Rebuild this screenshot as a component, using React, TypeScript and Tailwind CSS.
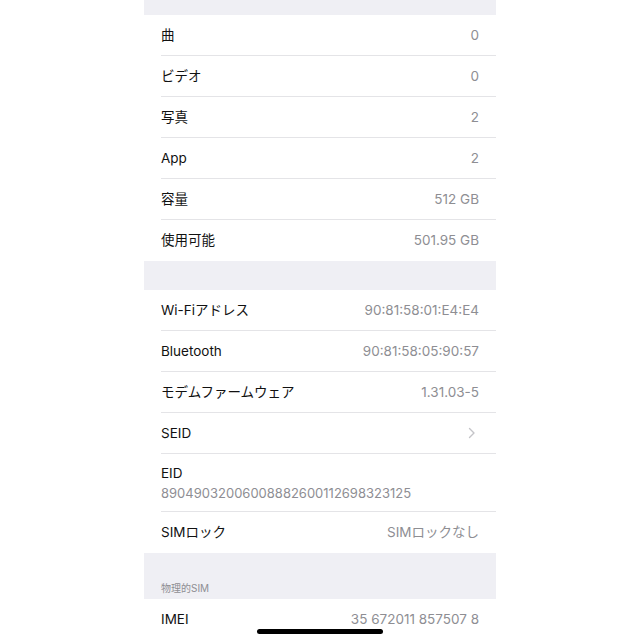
import React from "react";

const font = { fontFamily: 'Inter, "Noto Sans CJK JP", sans-serif' };

function Row({ label, value, last, chevron }: { label: string; value?: string; last?: boolean; chevron?: boolean }) {
  return (
    <div className="pl-[17px] bg-white">
      <div className={`flex h-[41px] items-center justify-between pr-[17px] ${last ? "" : "border-b border-[#e4e4e7]"}`}>
        <span className="text-[13.5px] text-[#111]">{label}</span>
        {chevron ? (
          <svg width="8" height="12" viewBox="0 0 8 12" className="mr-[3px]">
            <path d="M1.5 1.5 L6 6 L1.5 10.5" fill="none" stroke="#c4c4c8" strokeWidth="1.4" strokeLinecap="round" strokeLinejoin="round" />
          </svg>
        ) : (
          <span className="text-[13.5px] text-[#8e8e93]">{value}</span>
        )}
      </div>
    </div>
  );
}

export default function App() {
  return (
    <div className="relative h-[640px] w-[640px] overflow-hidden bg-white" style={font}>
      <div className="mx-auto w-[352px]">
        <div className="h-[15px] bg-[#efeff4]" />
        <Row label="曲" value="0" />
        <Row label="ビデオ" value="0" />
        <Row label="写真" value="2" />
        <Row label="App" value="2" />
        <Row label="容量" value="512 GB" />
        <Row label="使用可能" value="501.95 GB" last />
        <div className="h-[29px] bg-[#efeff4]" />
        <Row label="Wi-Fiアドレス" value="90:81:58:01:E4:E4" />
        <Row label="Bluetooth" value="90:81:58:05:90:57" />
        <Row label="モデムファームウェア" value="1.31.03-5" />
        <Row label="SEID" chevron />
        <div className="pl-[17px] bg-white">
          <div className="flex h-[58px] flex-col justify-center border-b border-[#e4e4e7] pr-[17px]">
            <span className="text-[13.5px] leading-[20px] text-[#111]">EID</span>
            <span className="text-[13px] leading-[20px] text-[#8e8e93]">89049032006008882600112698323125</span>
          </div>
        </div>
        <Row label="SIMロック" value="SIMロックなし" last />
        <div className="flex h-[46px] items-end bg-[#efeff4] pb-[3px] pl-[17px]">
          <span className="text-[10px] text-[#8e8e93]">物理的SIM</span>
        </div>
        <Row label="IMEI" value="35 672011 857507 8" last />
      </div>
      <div className="absolute left-[257px] top-[629px] h-[5px] w-[126px] rounded-full bg-black" />
    </div>
  );
}
